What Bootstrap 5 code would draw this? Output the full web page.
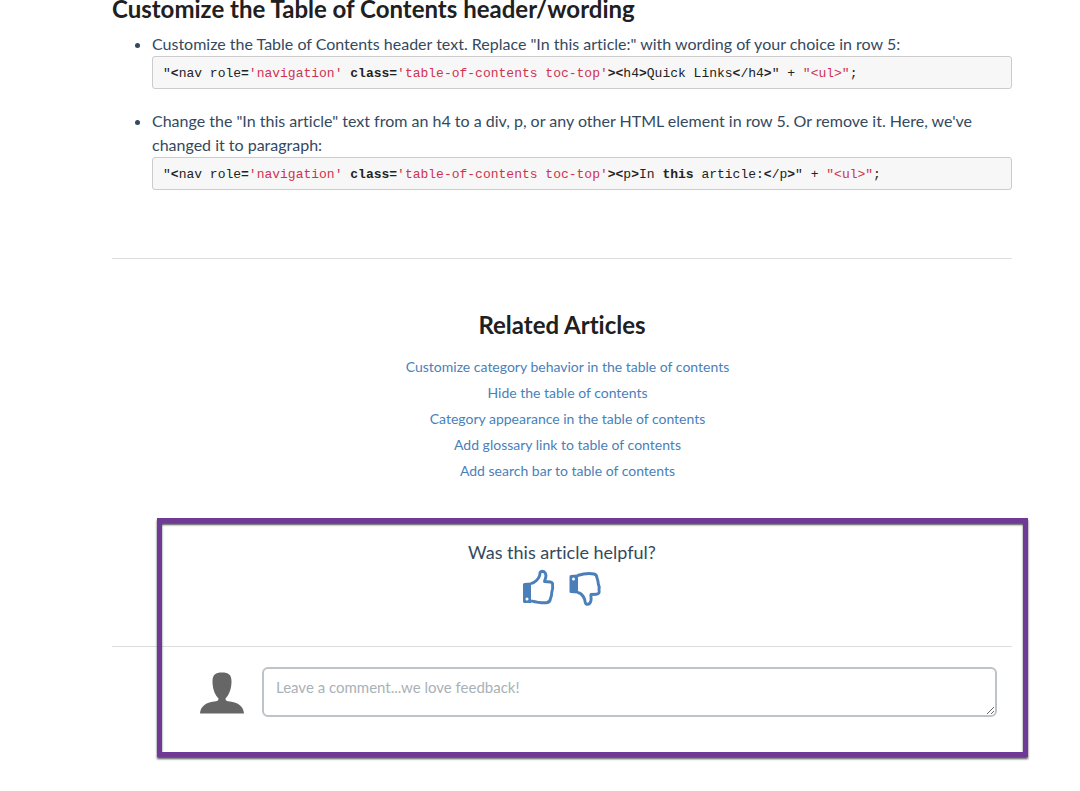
<!DOCTYPE html>
<html lang="en">
<head>
<meta charset="utf-8">
<meta name="viewport" content="width=device-width, initial-scale=1">
<title>Customize the Table of Contents</title>
<link href="https://cdn.jsdelivr.net/npm/bootstrap@5.3.0/dist/css/bootstrap.min.css" rel="stylesheet">
<style>
body { font-family: Lato, sans-serif; font-size: 16px; line-height: 24px; color: #34495e; font-variant-ligatures: none; }
.article-page { padding: 0 68px 32px 112px; }
h2 { font-size: 24px; line-height: 18px; font-weight: 700; color: #202020; margin: 0; }
.article-steps { padding-left: 40px; margin: 14px 0 68px; }
.article-steps > li + li { margin-top: 20px; }
.code-line { font-family: "Liberation Mono", monospace; font-size: 13px; line-height: 19px; color: #222; background: #f7f7f7; border: 1px solid #ccc; border-radius: 3px; padding: 7px 10px 5px; margin: 0; }
.code-line span { color: #d0324f; }
hr { border-color: #ddd; opacity: 1; margin: 0; }
.related-block { padding-top: 57px; }
.related-links { padding-left: 11px; margin: 20px 0 34px; line-height: 26px; font-size: 14px; }
.related-links a, .vote-btn { color: #4a7fba; }
.feedback-block { padding-top: 22px; }
.question-text { font-size: 18px; }
.vote-row { margin: 2px 0 38px; }
.vote-btn { width: 38px; height: 42px; }
.comment-row { padding: 20px 15px 40px 88px; gap: 18px; }
.comment-box { height: 50px; min-height: 50px; padding: 6px 12px; border: 2px solid #bdc3c7; border-radius: 6px; font-size: 15px; line-height: 24px; }
.comment-box::placeholder { color: #a9b1b8; }
.highlight-frame { inset: 0 -16px 0 45px; border: 5px solid #6f3a96; box-shadow: 0 2px 2px #555, inset 0 2px 2px #555; pointer-events: none; }
</style>
</head>
<body>
<main class="article-page">
  <section>
    <h2>Customize the Table of Contents header/wording</h2>
    <ul class="article-steps">
      <li>Customize the Table of Contents header text. Replace "In this article:" with wording of your choice in row 5:
        <pre class="code-line">"<b>&lt;</b>nav role<b>=</b><span>'navigation'</span> <b>class=</b><span>'table-of-contents toc-top'</span><b>&gt;&lt;</b>h4<b>&gt;</b>Quick Links<b>&lt;</b>/h4<b>&gt;</b>" + <span>"&lt;ul&gt;"</span>;</pre>
      </li>
      <li>Change the "In this article" text from an h4 to a div, p, or any other HTML element in row 5. Or remove it. Here, we've changed it to paragraph:
        <pre class="code-line">"<b>&lt;</b>nav role<b>=</b><span>'navigation'</span> <b>class=</b><span>'table-of-contents toc-top'</span><b>&gt;&lt;</b>p<b>&gt;</b>In <b>this</b> article:<b>&lt;</b>/p<b>&gt;</b>" + <span>"&lt;ul&gt;"</span>;</pre>
      </li>
    </ul>
  </section>
  <hr>
  <section class="related-block text-center">
    <h2>Related Articles</h2>
    <ul class="related-links list-unstyled">
      <li><a class="text-decoration-none" href="#">Customize category behavior in the table of contents</a></li>
      <li><a class="text-decoration-none" href="#">Hide the table of contents</a></li>
      <li><a class="text-decoration-none" href="#">Category appearance in the table of contents</a></li>
      <li><a class="text-decoration-none" href="#">Add glossary link to table of contents</a></li>
      <li><a class="text-decoration-none" href="#">Add search bar to table of contents</a></li>
    </ul>
  </section>
  <section class="feedback-block position-relative">
    <p class="question-text text-center m-0">Was this article helpful?</p>
    <div class="vote-row d-flex justify-content-center gap-2">
      <button type="button" class="vote-btn btn p-0 border-0 d-flex" aria-label="Yes">
        <svg width="38" height="42" viewBox="0 0 38 42" fill="none" aria-hidden="true">
          <path d="M4.500 17Q3 17 3 18.500V35.500Q3 37 4.500 37H11V16.500Z" fill="currentColor"/>
          <circle cx="7" cy="33" r="1.500" fill="#fff"/>
          <path d="M11 17.500C15 17 18.500 12.500 19.500 10C20.300 8 19 5.500 22 5.200C25 5.200 26.300 8 25.800 11C25.500 13 24.500 14.500 24.500 15.500L30.500 16Q33.300 16.500 32.500 19.500C33.300 22 32.500 24 31.800 26C31.800 28.500 31.300 30.500 30.500 32.500Q30 36.500 26.500 36.700C22 37.200 18 36.500 11 34.800" stroke="currentColor" stroke-width="2.900" stroke-linejoin="round"/>
        </svg>
      </button>
      <button type="button" class="vote-btn btn p-0 border-0 d-flex" aria-label="No">
        <svg width="38" height="42" viewBox="0 0 38 42" fill="none" aria-hidden="true">
          <path d="M5 9Q3.500 9 3.500 10.500V25.500Q3.500 27 5 27L12 27.500V8.500Z" fill="currentColor"/>
          <circle cx="7.500" cy="13" r="1.500" fill="#fff"/>
          <path d="M11.500 9.500C18 7.500 23 7 28 8Q30.700 8.500 31 12C31.800 14 32.300 16 32.300 18C33.300 20 33.500 22 33 24Q34 28 30.500 28.200L25 28.500C24.500 30 25.500 32 25 34.500C24.500 37 23 38.500 21 38.300C18.700 38 19.300 35 18.500 33.200C17.500 30.500 15.500 27 11.500 26.500" stroke="currentColor" stroke-width="2.900" stroke-linejoin="round"/>
        </svg>
      </button>
    </div>
    <hr>
    <div class="comment-row d-flex align-items-center">
      <svg class="flex-shrink-0" width="44" height="44" viewBox="0 0 44 44" fill="#666" aria-hidden="true">
        <path d="M22 2.500C28.500 2.500 31.500 4.500 31.500 11.500C31.500 19 29 25 25.500 28.500C25.500 30.500 26.500 31 28 31.200C38 32.200 43.500 36 44 43.500H0C.500 36 6 32.200 16 31.200C17.500 31 18.500 30.500 18.500 28.500C15 25 12.500 19 12.500 11.500C12.500 4.500 15.500 2.500 22 2.500Z"/>
      </svg>
      <textarea class="comment-box form-control" rows="1" aria-label="Comment" placeholder="Leave a comment...we love feedback!"></textarea>
    </div>
    <div class="highlight-frame position-absolute"></div>
  </section>
</main>
<script src="https://cdn.jsdelivr.net/npm/bootstrap@5.3.0/dist/js/bootstrap.bundle.min.js"></script>
</body>
</html>
